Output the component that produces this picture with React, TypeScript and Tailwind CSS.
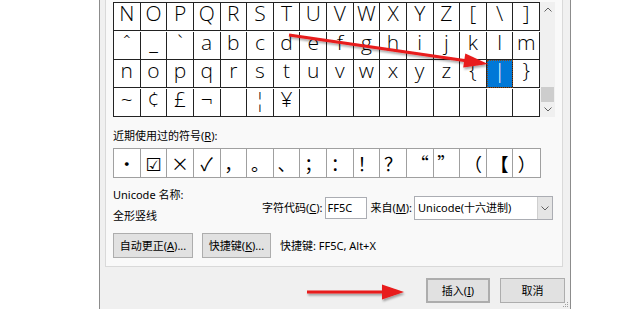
import React from 'react';

const ROWS: string[][] = [
  'NOPQRSTUVWXYZ[\\]'.split(''),
  ['ˆ', '_', '`', ...'abcdefghijklm'.split('')],
  'nopqrstuvwxyz{|}'.split(''),
  ['~', '¢', '£', '¬', '', '¦', '¥', '', '', '', '', '', '', '', '', ''],
];

const RECENT = ['•', '☑', '×', '✓', '，', '。', '、', '；', '：', '！', '？', '“', '”', '（', '【', '）'];

function Chevron({ up }: { up?: boolean }) {
  return (
    <svg width="8" height="5" viewBox="0 0 8 5">
      <path
        d={up ? 'M0.5 4.5L4 1L7.5 4.5' : 'M0.5 0.5L4 4L7.5 0.5'}
        fill="none"
        stroke="#606060"
        strokeWidth="1"
      />
    </svg>
  );
}

function Scrollbar() {
  return (
    <div className="flex h-[115px] w-[15px] flex-col items-center bg-[#f0f0f0]">
      <div className="flex h-[15px] items-center">
        <Chevron up />
      </div>
      <div className="mt-[70px] h-[15px] w-[13px] bg-[#cdcdcd]" />
      <div className="mt-auto flex h-[15px] items-center">
        <Chevron />
      </div>
    </div>
  );
}

function Button({ children, className = '' }: { children: React.ReactNode; className?: string }) {
  return (
    <div
      className={`flex h-[25px] items-center justify-center border border-[#adadad] bg-[#e1e1e1] ${className}`}
    >
      {children}
    </div>
  );
}

export default function App() {
  return (
    <div className="relative h-[309px] w-[620px] overflow-hidden bg-white text-[11px] leading-[16px] text-black font-['Noto_Sans','Noto_Sans_CJK_SC',sans-serif]">
      <div className="relative ml-[99px] flex h-full w-[472px] flex-col border-x border-[#8c8c8c] bg-[#f0f0f0]">
        {/* Tab page */}
        <div className="ml-[5px] h-[267px] w-[458px] border-x border-b border-[#d9d9d9] bg-[#f9f9f9] pl-[7px]">
          {/* Symbol grid */}
          <div className="mt-[2px] flex">
            <div className="grid w-[427px] grid-cols-16 border-l border-t border-[#222] bg-white font-['Open_Sans',sans-serif] text-[21px] font-light leading-[21px]">
              {ROWS.map((row, r) =>
                row.map((ch, c) => {
                  const selected = r === 2 && c === 14;
                  return (
                    <div
                      key={`${r}-${c}`}
                      className={`h-[28px] border-b border-r border-[#222] text-center ${
                        selected
                          ? 'bg-[#0078d7] text-white outline-1 -outline-offset-1 outline-dotted outline-[#8a4a1a]'
                          : ''
                      }`}
                    >
                      {ch}
                    </div>
                  );
                })
              )}
            </div>
            <Scrollbar />
          </div>

          <div className="mt-[11px]">
            近期使用过的符号(<u>R</u>):
          </div>

          {/* Recently used */}
          <div className="mt-[4px] grid w-[428px] grid-cols-16 border border-[#a0a0a0] bg-white font-['Noto_Sans_CJK_SC','DejaVu_Sans',sans-serif] text-[18px] leading-[28px]">
            {RECENT.map((ch, i) => (
              <div
                key={i}
                className={`h-[28px] overflow-hidden text-center ${i < RECENT.length - 1 ? 'border-r border-[#a0a0a0]' : ''} ${
                  ch === '【' ? 'font-bold' : ''
                }`}
              >
                {ch}
              </div>
            ))}
          </div>

          {/* Info */}
          <div className="mt-[9px] flex items-start">
            <div className="flex w-[149px] flex-col gap-[5px]">
              <div>Unicode 名称:</div>
              <div>全形竖线</div>
            </div>
            <div className="mt-[9px] flex h-[24px] items-center">
              <span>
                字符代码(<u>C</u>):
              </span>
              <div className="ml-[2px] flex h-[22px] w-[42px] items-center border border-[#abadb3] bg-white pl-[2px]">
                FF5C
              </div>
              <span className="ml-[4px]">
                来自(<u>M</u>):
              </span>
              <div className="ml-[2px] flex h-[24px] w-[139px] items-center border border-[#abadb3] bg-white">
                <span className="flex-1 pl-[3px]">Unicode(十六进制)</span>
                <div className="flex h-full w-[15px] items-center justify-center border-l border-[#cfcfcf] bg-[#e5e5e5]">
                  <Chevron />
                </div>
              </div>
            </div>
          </div>

          <div className="mt-[9px] flex items-center">
            <Button className="w-[80px]">
              自动更正(<u>A</u>)...
            </Button>
            <Button className="ml-[9px] w-[69px]">
              快捷键(<u>K</u>)...
            </Button>
            <span className="ml-[9px]">快捷键: FF5C, Alt+X</span>
          </div>
        </div>

        {/* Bottom buttons */}
        <div className="flex flex-1 items-start justify-end gap-[10px] pr-[5px] pt-[11px]">
          <Button className="w-[64px] border-2 border-[#0078d7]">
            插入(<u>I</u>)
          </Button>
          <Button className="w-[65px]">取消</Button>
        </div>

        {/* Resize grip */}
        <svg className="absolute bottom-[1px] right-[1px]" width="8" height="8" viewBox="0 0 8 8">
          <rect x="6" y="2" width="1" height="1" fill="#a0a0a0" />
          <rect x="4" y="4" width="1" height="1" fill="#a0a0a0" />
          <rect x="6" y="4" width="1" height="1" fill="#a0a0a0" />
          <rect x="2" y="6" width="1" height="1" fill="#a0a0a0" />
          <rect x="4" y="6" width="1" height="1" fill="#a0a0a0" />
          <rect x="6" y="6" width="1" height="1" fill="#a0a0a0" />
        </svg>
      </div>

      {/* Red annotation arrows */}
      <svg className="pointer-events-none absolute inset-0" width="620" height="309" viewBox="0 0 620 309">
        <defs>
          <filter id="shadow" x="-10%" y="-50%" width="120%" height="200%">
            <feDropShadow dx="1" dy="2" stdDeviation="1.2" floodColor="#000" floodOpacity="0.35" />
          </filter>
        </defs>
        <g filter="url(#shadow)" fill="#e81b1b" stroke="none">
          <line x1="289" y1="35" x2="466" y2="60.8" stroke="#e81b1b" strokeWidth="3" />
          <polygon points="488,64 463.2,67.5 465.3,53.6" />
          <line x1="307" y1="292" x2="384" y2="292" stroke="#e81b1b" strokeWidth="3" />
          <polygon points="404,292 382,284.5 382,299.5" />
        </g>
      </svg>
    </div>
  );
}
